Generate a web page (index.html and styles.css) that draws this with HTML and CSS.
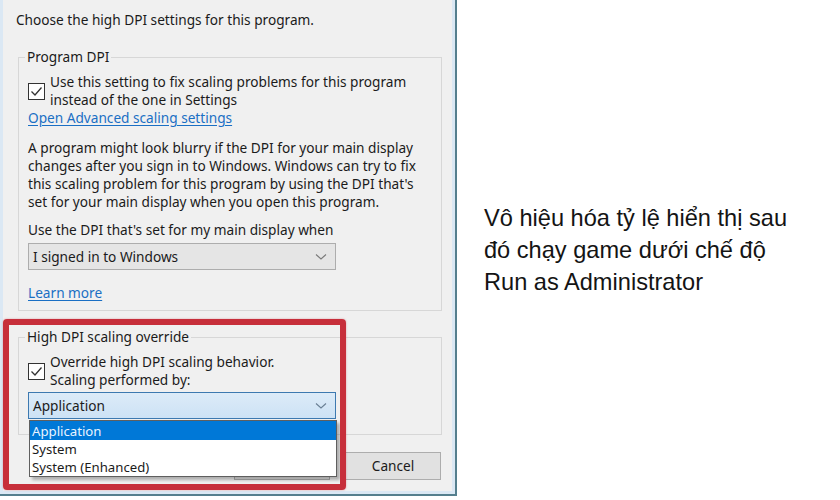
FILE: index.html
```html
<!DOCTYPE html>
<html lang="vi">
<head>
<meta charset="utf-8">
<title>High DPI settings</title>
<link rel="stylesheet" href="styles.css">
</head>
<body>
<div class="page">
  <div class="frame">
    <div class="dialog">
      <p class="title">Choose the high DPI settings for this program.</p>

      <fieldset class="group group-first">
        <legend>Program DPI</legend>
        <div class="check-row">
          <span class="checkbox"><svg viewBox="0 0 17 17" width="17" height="17"><path d="M3.5 8.5 L7 12 L13.5 4.5" fill="none" stroke="#333" stroke-width="1.3"/></svg></span>
          <span class="check-text">Use this setting to fix scaling problems for this program<br>instead of the one in Settings</span>
        </div>
        <a class="link" href="#">Open Advanced scaling settings</a>
        <p class="para">A program might look blurry if the DPI for your main display<br>changes after you sign in to Windows. Windows can try to fix<br>this scaling problem for this program by using the DPI that's<br>set for your main display when you open this program.</p>
        <p class="label">Use the DPI that's set for my main display when</p>
        <div class="combo">
          <span>I signed in to Windows</span>
          <svg class="chev" viewBox="0 0 12 8" width="12" height="8"><path d="M1 1.5 L6 6 L11 1.5" fill="none" stroke="#7a7a7a" stroke-width="1.1"/></svg>
        </div>
        <a class="link learn" href="#">Learn more</a>
      </fieldset>

      <fieldset class="group group-second">
        <legend>High DPI scaling override</legend>
        <div class="check-row">
          <span class="checkbox"><svg viewBox="0 0 17 17" width="17" height="17"><path d="M3.5 8.5 L7 12 L13.5 4.5" fill="none" stroke="#333" stroke-width="1.3"/></svg></span>
          <span class="check-text">Override high DPI scaling behavior.<br>Scaling performed by:</span>
        </div>
        <div class="combo combo-open">
          <span>Application</span>
          <svg class="chev" viewBox="0 0 12 8" width="12" height="8"><path d="M1 1.5 L6 6 L11 1.5" fill="none" stroke="#6a7f94" stroke-width="1.1"/></svg>
        </div>
      </fieldset>

      <div class="buttons">
        <button class="btn">OK</button>
        <button class="btn">Cancel</button>
      </div>

      <ul class="droplist">
        <li class="selected">Application</li>
        <li>System</li>
        <li>System (Enhanced)</li>
      </ul>
      <div class="highlight"></div>
    </div>
  </div>
  <div class="caption">
    <p>Vô hiệu hóa tỷ lệ hiển thị sau<br>đó chạy game dưới chế độ<br>Run as Administrator</p>
  </div>
</div>
</body>
</html>
```

FILE: styles.css
```css
html, body {
  margin: 0;
  padding: 0;
  background: #ffffff;
}

.page {
  display: flex;
  width: 840px;
  height: 500px;
}

.frame {
  box-sizing: border-box;
  width: 457px;
  height: 496px;
  background: #dbe8f4;
  border-right: 2px solid #557f8e;
  border-bottom: 2px solid #557f8e;
  padding: 0 3px 3px 3px;
}

.dialog {
  position: relative;
  box-sizing: border-box;
  height: 100%;
  background: #f0f0f0;
  padding: 11px 0 0 15px;
  font-family: "Noto Sans", "Open Sans", sans-serif;
  font-size: 13.65px;
  line-height: 18px;
  color: #1b1b1b;
}

.title {
  margin: 0 0 19px -2px;
}

.group {
  box-sizing: border-box;
  width: 424px;
  margin: 0;
  border: 1px solid #d7d7d7;
  padding: 0 0 8px 9px;
}

.group legend {
  padding: 0 2px;
  margin-left: -3px;
}

.group-second {
  margin-top: 17px;
  padding-bottom: 15px;
}

.check-row {
  display: flex;
  align-items: center;
  margin-top: 7px;
  white-space: nowrap;
}

.checkbox {
  box-sizing: border-box;
  width: 17px;
  height: 17px;
  border: 1px solid #333;
  background: #fff;
  margin-right: 5px;
  flex: none;
  display: flex;
}

.checkbox svg {
  margin: -1px;
}

.link {
  display: block;
  width: max-content;
  color: #1a6fc4;
  text-decoration: underline;
  text-underline-offset: 2px;
}

.para {
  margin: 12px 0 0 0;
  white-space: nowrap;
}

.label {
  margin: 10px 0 0 0;
}

.combo {
  box-sizing: border-box;
  width: 308px;
  height: 27px;
  margin-top: 4px;
  border: 1px solid #adadad;
  background: #e5e5e5;
  display: flex;
  align-items: center;
  justify-content: space-between;
  padding: 0 8px 0 4px;
}

.combo-open {
  margin-top: 3px;
  border-color: #3d79b0;
  background: linear-gradient(#dcebf8, #cde2f5);
}

.learn {
  margin-top: 14px;
}

.buttons {
  display: flex;
  justify-content: flex-end;
  gap: 15px;
  width: 423px;
  margin-top: 17px;
}

.btn {
  box-sizing: border-box;
  width: 96px;
  height: 28px;
  background: #e1e1e1;
  border: 1px solid #adadad;
  font: inherit;
  color: #1b1b1b;
  padding: 0;
}

.droplist {
  position: absolute;
  left: 26px;
  top: 420px;
  box-sizing: border-box;
  width: 308px;
  height: 57px;
  margin: 0;
  padding: 0;
  list-style: none;
  background: #fff;
  border: 1px solid #5f5f5f;
  box-shadow: 3px 3px 3px rgba(0, 0, 0, 0.28);
  font-size: 13.2px;
}

.droplist li {
  height: 18px;
  line-height: 18px;
  padding-left: 2px;
}

.droplist li.selected {
  height: 19px;
  line-height: 20px;
  background: #0078d7;
  color: #eaf4ff;
}

.highlight {
  position: absolute;
  left: 0;
  top: 319px;
  box-sizing: border-box;
  width: 343px;
  height: 171px;
  border: 6px solid #c72f3b;
  border-radius: 4px;
  box-shadow: 0 0 2px rgba(199, 47, 59, 0.45);
}

.caption {
  flex: 1;
  display: flex;
  align-items: center;
  padding-left: 27px;
}

.caption p {
  margin: 0;
  font-family: "Liberation Sans", Arial, sans-serif;
  font-size: 23.6px;
  line-height: 32px;
  color: #141414;
}
```
